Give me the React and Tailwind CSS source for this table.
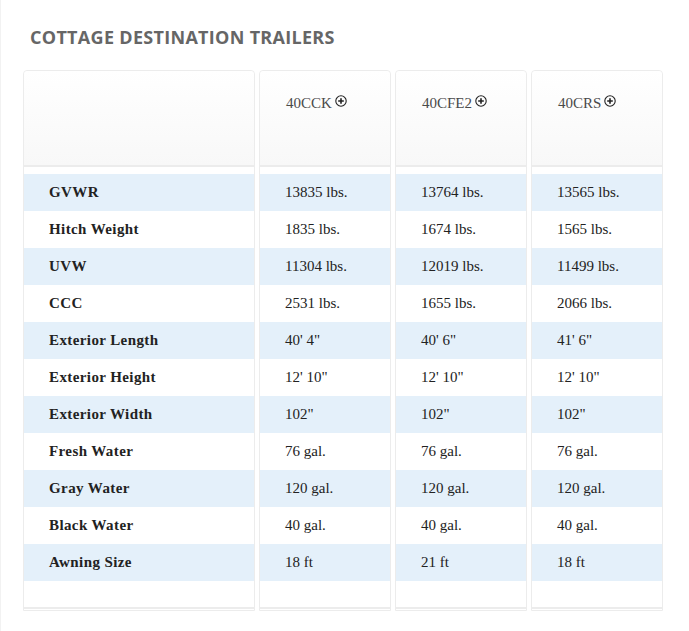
import React from "react";

const serif = { fontFamily: '"Liberation Serif", "DejaVu Serif", serif' };

const labels = [
  "GVWR",
  "Hitch Weight",
  "UVW",
  "CCC",
  "Exterior Length",
  "Exterior Height",
  "Exterior Width",
  "Fresh Water",
  "Gray Water",
  "Black Water",
  "Awning Size",
];

const models = [
  {
    name: "40CCK",
    specs: ["13835 lbs.", "1835 lbs.", "11304 lbs.", "2531 lbs.", "40' 4\"", "12' 10\"", "102\"", "76 gal.", "120 gal.", "40 gal.", "18 ft"],
  },
  {
    name: "40CFE2",
    specs: ["13764 lbs.", "1674 lbs.", "12019 lbs.", "1655 lbs.", "40' 6\"", "12' 10\"", "102\"", "76 gal.", "120 gal.", "40 gal.", "21 ft"],
  },
  {
    name: "40CRS",
    specs: ["13565 lbs.", "1565 lbs.", "11499 lbs.", "2066 lbs.", "41' 6\"", "12' 10\"", "102\"", "76 gal.", "120 gal.", "40 gal.", "18 ft"],
  },
];

const PlusCircle = () => (
  <svg width="12" height="12" viewBox="0 0 12 12" className="inline-block ml-[3px] -mt-[7px] align-middle">
    <circle cx="6" cy="6" r="5.2" fill="none" stroke="#222" strokeWidth="1.1" />
    <path d="M6 3.2v5.6M3.2 6h5.6" stroke="#222" strokeWidth="1.6" />
  </svg>
);

const Column = ({ width, header, rows, bold }) => (
  <div
    className="flex flex-col border border-[#ececec] rounded-t-[4px] bg-white"
    style={{ width }}
  >
    <div className="h-[94px] rounded-t-[4px] bg-gradient-to-b from-white to-[#f8f8f8] pt-[21px] pl-[26px] text-[15px] text-[#4a4a4a]">
      {header}
    </div>
    <div className="h-[2px] bg-[#ececec]" />
    <div className="h-[7px]" />
    {rows.map((r, i) => (
      <div
        key={i}
        className={`h-[37px] flex items-center pl-[25px] text-[15px] text-[#222] ${
          i % 2 === 0 ? "bg-[#e4f0fa]" : "bg-white"
        } ${bold ? "font-bold tracking-[0.4px]" : ""}`}
      >
        {r}
      </div>
    ))}
    <div className="h-[26px]" />
    <div className="h-[2px] bg-[#ececec]" />
    <div className="h-[1px]" />
  </div>
);

export default function App() {
  return (
    <div className="w-[689px] h-[631px] bg-white border-l border-[#f2f2f2] pl-[22px] pt-[24px]" style={serif}>
      <h2
        className="ml-[7px] h-[46px] text-[18px] font-bold text-[#666] tracking-[0.3px]"
        style={{ fontFamily: '"Open Sans", "DejaVu Sans", sans-serif' }}
      >
        COTTAGE DESTINATION TRAILERS
      </h2>
      <div className="flex gap-[4px]">
        <Column width={232} header="" rows={labels} bold />
        {models.map((m) => (
          <Column
            key={m.name}
            width={132}
            header={
              <span>
                {m.name}
                <PlusCircle />
              </span>
            }
            rows={m.specs}
          />
        ))}
      </div>
    </div>
  );
}
